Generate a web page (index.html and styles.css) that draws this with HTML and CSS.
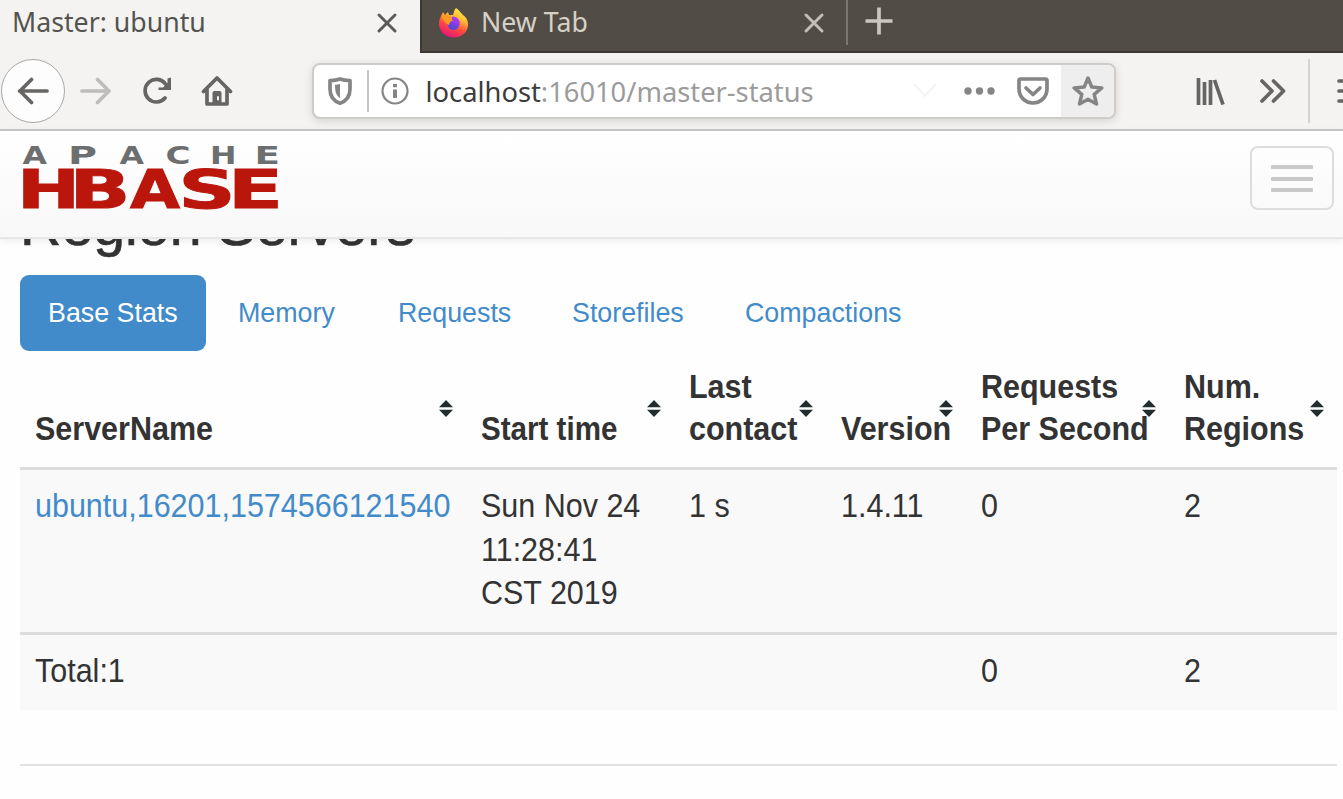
FILE: index.html
```html
<!DOCTYPE html>
<html lang="en">
<head>
<meta charset="utf-8">
<title>Master: ubuntu</title>
<link rel="stylesheet" href="styles.css">
</head>
<body>
<div class="tabs">
  <div class="tab active"><span class="tab-title master">Master: ubuntu</span>
    <svg class="close" width="22" height="22" viewBox="0 0 22 22"><path d="M3 3L19 19M19 3L3 19"/></svg></div>
  <div class="tab other">
    <svg class="fox" width="32" height="32" viewBox="0 0 32 32">
      <defs><linearGradient id="fire" x1=".8" y1="0" x2=".35" y2="1"><stop offset="0" stop-color="#fff44f"/><stop offset=".35" stop-color="#ffb833"/><stop offset=".65" stop-color="#ff4c3b"/><stop offset="1" stop-color="#e5127c"/></linearGradient>
      <linearGradient id="globe" x1=".7" y1="0" x2=".3" y2="1"><stop offset="0" stop-color="#a938f0"/><stop offset="1" stop-color="#4a4bd0"/></linearGradient></defs>
      <path fill="url(#fire)" d="M18 1c4 3 5 5 7 7 3 2 5 5 5 9.500C30 25 24 30.500 16 30.500S1 25 1 17c0-5 2-8 4-12l2 3 3-3 1 3 4 0c1-3 1-5 3-7z"/>
      <circle cx="15.500" cy="17" r="6" fill="url(#globe)"/>
      <path fill="#ff9a20" d="M4 9c4-2 8-1 12 3l-1 2c-3 0-3 1-4 4-3-1-6-5-7-9z"/>
      <path fill="#9f3aef" d="M14 10c4-1 7 2 8 6l-4 1-4-4z"/>
    </svg>
    <span class="tab-title newtab">New Tab</span>
    <svg class="close" width="22" height="22" viewBox="0 0 22 22"><path d="M3 3L19 19M19 3L3 19"/></svg></div>
  <div class="plus"><svg width="28" height="28" viewBox="0 0 28 28"><path d="M14 .5v27M.5 14h27"/></svg></div>
</div>

<div class="toolbar">
  <div class="back"><svg width="32" height="28" viewBox="0 0 32 28"><path d="M30 14H2.500M14.500 2.500L3 14l11.500 11.500"/></svg></div>
  <svg class="fwd" width="32" height="28" viewBox="0 0 32 28"><path d="M2 14H29M17.500 2.500l11.500 11.500-11.500 11.500"/></svg>
  <svg class="reload" width="30" height="28" viewBox="0 0 30 28"><path d="M23 21A11.300 11.300 0 1 1 23.500 7"/><path class="solid" d="M29 .5V13H16.500v-2.500h4.500L25.500 6V1.500z"/></svg>
  <svg class="home" width="32" height="32" viewBox="0 0 32 32"><path d="M2.500 16.500L16 3l13.500 13.500M6 14v15h20V14"/><path class="solid" d="M11.500 29V18q0-2 2-2h5q2 0 2 2v11z"/><path class="knob" d="M17 22v2.500"/></svg>
  <div class="urlbar">
    <svg class="shield" width="24" height="28" viewBox="0 0 24 28"><path d="M12 2C9 3.200 5 3.600 2 3.600V12c0 7 3.500 12 10 14.200C18.500 24 22 19 22 12V3.600C19 3.600 15 3.200 12 2z"/><path class="solid" d="M12 7v14c-3.500-2-5-6-5-13z"/></svg>
    <i class="rule"></i>
    <svg class="info" width="28" height="28" viewBox="0 0 28 28"><circle cx="14" cy="14" r="12.500"/><path class="dot" d="M14 7v3.200M14 12.500v8.500"/></svg>
    <span class="url"><b>localhost</b>:16010/master-status</span>
    <svg class="drop" width="22" height="14" viewBox="0 0 22 14"><path d="M1 1l10 11L21 1"/></svg>
    <svg class="dots" width="32" height="8" viewBox="0 0 32 8"><circle cx="4" cy="4" r="3.700"/><circle cx="15.500" cy="4" r="3.700"/><circle cx="27" cy="4" r="3.700"/></svg>
    <svg class="pocket" width="32" height="28" viewBox="0 0 32 28"><path d="M3.500 2h25q1.500 0 1.500 1.500V12a14 14 0 0 1-28 0V3.500Q2 2 3.500 2z"/><path d="M9 11l7 6.500 7-6.500"/></svg>
    <div class="star"><svg width="32" height="32" viewBox="0 0 32 32"><path d="M16 3l3.800 9.100 10 .8-7.600 6.500 2.300 9.600L16 24.300 7.500 29l2.300-9.600-7.600-6.500 10-.8z"/></svg></div>
  </div>
  <svg class="library" width="30" height="27" viewBox="0 0 30 27"><path d="M2.500 0v27M8.500 4v23M14.500 2v25M18.500 2l8.500 24.500"/></svg>
  <svg class="more" width="28" height="26" viewBox="0 0 28 26"><path d="M3 3l10 10L3 23M14.500 3l10 10-10 10"/></svg>
  <i class="bar-rule"></i>
  <svg class="menu" width="7" height="24" viewBox="0 0 7 24"><path d="M2 2h10M2 12h10M2 22h10"/></svg>
</div>

<header class="navbar">
  <svg class="logo" width="260" height="68" viewBox="20 143 260 68" role="img" aria-label="Apache HBase">
    <g class="apache">
      <text x="22.500" y="164" textLength="24.500" lengthAdjust="spacingAndGlyphs">A</text><text x="68" y="164" textLength="29" lengthAdjust="spacingAndGlyphs">P</text><text x="119.500" y="164" textLength="24.500" lengthAdjust="spacingAndGlyphs">A</text><text x="165.500" y="164" textLength="25" lengthAdjust="spacingAndGlyphs">C</text><text x="210" y="164" textLength="26.500" lengthAdjust="spacingAndGlyphs">H</text><text x="254.500" y="164" textLength="25.500" lengthAdjust="spacingAndGlyphs">E</text>
    </g>
    <g class="hbase">
      <text x="17" y="208" textLength="63" lengthAdjust="spacingAndGlyphs">H</text><text x="69.500" y="208" textLength="61" lengthAdjust="spacingAndGlyphs">B</text><text x="130" y="208" textLength="50" lengthAdjust="spacingAndGlyphs">A</text><text x="178.500" y="208" textLength="57" lengthAdjust="spacingAndGlyphs">S</text><text x="228" y="208" textLength="55" lengthAdjust="spacingAndGlyphs">E</text>
    </g>
  </svg>
  <div class="toggle"><i></i><i></i><i></i></div>
</header>

<main>
  <div class="heading"><h2>Region Servers</h2></div>
  <nav class="pills"><a class="on"><span>Base Stats</span></a><a><span>Memory</span></a><a><span>Requests</span></a><a><span>Storefiles</span></a><a><span>Compactions</span></a></nav>
  <div class="table">
    <div class="row head">
      <div><span>ServerName</span><svg class="sort" width="14" height="17" viewBox="0 0 14 17"><path d="M7 0l7 7.200H0zM0 9.800h14L7 17z"/></svg></div>
      <div><span class="start">Start time</span><svg class="sort" width="14" height="17" viewBox="0 0 14 17"><path d="M7 0l7 7.200H0zM0 9.800h14L7 17z"/></svg></div>
      <div><span>Last<br>contact</span><svg class="sort" width="14" height="17" viewBox="0 0 14 17"><path d="M7 0l7 7.200H0zM0 9.800h14L7 17z"/></svg></div>
      <div><span>Version</span><svg class="sort" width="14" height="17" viewBox="0 0 14 17"><path d="M7 0l7 7.200H0zM0 9.800h14L7 17z"/></svg></div>
      <div><span>Requests<br>Per Second</span><svg class="sort" width="14" height="17" viewBox="0 0 14 17"><path d="M7 0l7 7.200H0zM0 9.800h14L7 17z"/></svg></div>
      <div><span>Num.<br>Regions</span><svg class="sort" width="14" height="17" viewBox="0 0 14 17"><path d="M7 0l7 7.200H0zM0 9.800h14L7 17z"/></svg></div>
    </div>
    <div class="row body">
      <div><span class="link">ubuntu,16201,1574566121540</span></div>
      <div><span>Sun Nov 24<br>11:28:41<br>CST 2019</span></div>
      <div><span>1 s</span></div><div><span>1.4.11</span></div><div><span>0</span></div><div><span>2</span></div>
    </div>
    <div class="row total">
      <div><span>Total:1</span></div><div></div><div></div><div></div><div><span>0</span></div><div><span>2</span></div>
    </div>
  </div>
  <hr>
</main>
</body>
</html>
```
FILE: styles.css
```css
* { box-sizing: border-box; }
html, body { margin: 0; height: 799px; overflow: hidden; background: #fefefe; }
body { font-family: "Liberation Sans", Arial, sans-serif; color: #333; }
svg { display: block; flex: none; fill: none; stroke-width: 3.700; stroke-linecap: round; stroke-linejoin: round; }
i { display: block; flex: none; }

.tabs { display: flex; height: 53px; background: #514d46; border-bottom: 2px solid #3b3832; font-family: "Noto Sans", sans-serif; font-size: 26.700px; }
.tab { display: flex; align-items: center; flex: none; height: 51px; padding-bottom: 5px; }
.tab.active { width: 420px; height: 53px; padding: 0 22px 7px 12px; justify-content: space-between; background: #f4f3f1; color: #55534f; }
.tab.other { width: 426px; padding-left: 16px; padding-right: 21px; border-left: 2px solid #3b3832; color: #d6d1c7; }
.tab-title { line-height: 44px; margin-top: -2px; white-space: nowrap; }
.newtab { margin-left: 11px; margin-right: auto; }
.close { stroke: #5c5b59; stroke-width: 3; }
.other .close { stroke: #c3bfb6; }
.plus { height: 45px; padding: 7px 0 0 17px; border-left: 2px solid #7b776f; stroke: #cbc7be; }
.plus svg { stroke-linecap: butt; }

.toolbar { display: flex; align-items: center; height: 78px; background: #f4f3f1; border-bottom: 2px solid #c9c7c5; stroke: #666563; }
.back { display: flex; align-items: center; justify-content: center; flex: none; width: 64px; height: 64px; margin-left: 1px; border: 1.500px solid #a9a8a6; border-radius: 50%; background: #fdfdfd; }
.fwd { margin-left: 15px; stroke: #bebdbb; }
.reload { margin-left: 30px; }
.home { margin-left: 29px; }
.solid { fill: #666563; stroke: none; }
.knob { stroke: #f4f3f1; stroke-width: 2; }
.urlbar { display: flex; align-items: center; flex: none; width: 804px; height: 56px; margin-left: 79px; border: 2px solid #cecbc8; border-radius: 8px; background: #fff; overflow: hidden; stroke: #858585; box-shadow: 0 2px 8px #0002; }
.shield { margin-left: 14px; }
.shield .solid { fill: #858585; }
.rule { width: 1.500px; height: 42px; margin-left: 15px; background: #c6c6c6; }
.info { margin-left: 12px; stroke-width: 2.200; }
.dot { stroke-width: 4; stroke-linecap: butt; }
.url { width: 392px; margin-left: 17px; padding-top: 2px; font: 27.300px/52px "Noto Sans", sans-serif; color: #9b9b9b; white-space: nowrap; }
.url b { font-weight: 400; color: #3c3c3c; }
.drop { margin-left: 96px; stroke: #f4f4f4; stroke-width: 2; }
.dots { margin-left: 28px; fill: #858585; stroke: none; }
.pocket { margin-left: 21px; }
.star { display: flex; align-items: center; justify-content: center; flex: none; width: 53px; height: 52px; margin-left: auto; background: #eee; }
.star svg { stroke-width: 3.500; }
.library { margin-left: 80px; stroke-linecap: butt; }
.more { margin-left: 33px; }
.bar-rule { width: 1.500px; height: 64px; margin-left: 21px; background: #d4d3d2; }
.menu { margin-left: 27px; }

.navbar { display: flex; align-items: flex-start; justify-content: space-between; position: relative; height: 108px; padding: 12px 9px 0 20px; border-bottom: 2px solid #e7e7e7; background: linear-gradient(#fff, #f8f8f8); box-shadow: 0 2px 8px #00000013; }
.logo { overflow: visible; }
.logo text { font-family: "DejaVu Sans", sans-serif; font-weight: 700; }
.apache { font-size: 24.500px; fill: #6d6e70; }
.hbase { font-size: 53.500px; fill: #ba160c; stroke: #ba160c; stroke-width: 1; stroke-linejoin: miter; }
.toggle { display: flex; flex-direction: column; align-items: center; gap: 7.500px; width: 84px; height: 64px; margin-top: 3px; padding-top: 17px; border: 2px solid #ddd; border-radius: 8px; }
.toggle i { width: 42px; height: 4px; border-radius: 1px; background: #c9c9c9; }

main { padding: 0 6px 0 20px; }
.heading { height: 36px; overflow: hidden; }
h2 { margin: -45px 0 0; font-size: 57.300px; line-height: 62px; font-weight: 400; white-space: nowrap; -webkit-text-stroke: .6px #333; }
.pills { display: flex; gap: 4px; height: 76px; color: #428bca; font-size: 27.500px; line-height: 76px; }
.pills a { width: 186px; padding-left: 28px; border-radius: 9px; white-space: nowrap; }
.pills a:nth-child(2) { width: 155.500px; }
.pills a:nth-child(3) { width: 170.500px; }
.pills a:nth-child(4) { width: 168.500px; }
.pills a span, .row span { display: inline-block; transform: scaleX(.975); transform-origin: 0 50%; }
.pills .on { background: #428bca; color: #fff; }

.table { margin-top: 15px; width: 1317px; font-size: 32.500px; line-height: 43.500px; }
.row { display: grid; grid-template-columns: 446px 208px 152px 140px 203px 168px; }
.row > div { position: relative; padding: 15px 0 0 15px; }
.row span { transform: scaleX(.938); white-space: nowrap; }
.row .start { transform: scaleX(.91); }
.row.head { height: 104px; align-items: end; border-bottom: 3px solid #ddd; font-weight: 700; line-height: 42px; }
.row.head > div { height: 101px; display: flex; align-items: flex-end; padding: 0 0 17px 15px; }
.sort { position: absolute; right: 13px; top: 34px; fill: #222c2e; }
.row.body { height: 162px; background: #f9f9f9; }
.row.total { height: 78px; border-top: 3px solid #ddd; background: #f9f9f9; }
.link { color: #428bca; }
hr { margin: 54px 0 0; border: 0; height: 2px; background: #e2e2e2; }
```
